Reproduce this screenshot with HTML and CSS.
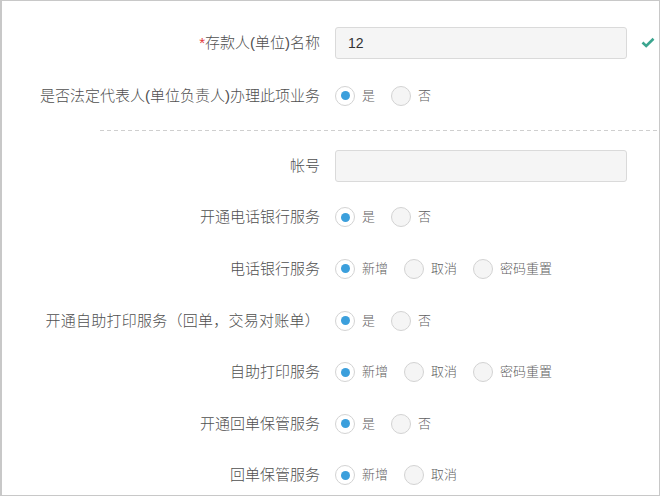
FILE: index.html
```html
<!DOCTYPE html>
<html lang="zh-CN">
<head>
<meta charset="utf-8">
<title>开户信息</title>
<link rel="stylesheet" href="styles.css">
</head>
<body>
<div class="frame">
  <div class="section section-top">
    <div class="row row-tall">
      <div class="label"><span class="req">*</span>存款人(单位)名称</div>
      <div class="ctrl">
        <div class="input">12</div>
        <svg class="check" width="14" height="11" viewBox="0 0 14 11"><polyline points="1.5,5.5 5.2,9 12.5,1.8" fill="none" stroke="#3ba58f" stroke-width="2.6" stroke-linecap="butt" stroke-linejoin="miter"/></svg>
      </div>
    </div>
    <div class="row row-tall">
      <div class="label">是否法定代表人(单位负责人)办理此项业务</div>
      <div class="ctrl">
        <span class="radio"><span class="dot on"></span>是</span>
        <span class="radio"><span class="dot"></span>否</span>
      </div>
    </div>
  </div>
  <div class="divider"></div>
  <div class="section">
    <div class="row">
      <div class="label">帐号</div>
      <div class="ctrl"><div class="input"></div></div>
    </div>
    <div class="row">
      <div class="label">开通电话银行服务</div>
      <div class="ctrl">
        <span class="radio"><span class="dot on"></span>是</span>
        <span class="radio"><span class="dot"></span>否</span>
      </div>
    </div>
    <div class="row">
      <div class="label">电话银行服务</div>
      <div class="ctrl">
        <span class="radio"><span class="dot on"></span>新增</span>
        <span class="radio"><span class="dot"></span>取消</span>
        <span class="radio"><span class="dot"></span>密码重置</span>
      </div>
    </div>
    <div class="row">
      <div class="label wide">开通自助打印服务（回单，交易对账单）</div>
      <div class="ctrl">
        <span class="radio"><span class="dot on"></span>是</span>
        <span class="radio"><span class="dot"></span>否</span>
      </div>
    </div>
    <div class="row">
      <div class="label">自助打印服务</div>
      <div class="ctrl">
        <span class="radio"><span class="dot on"></span>新增</span>
        <span class="radio"><span class="dot"></span>取消</span>
        <span class="radio"><span class="dot"></span>密码重置</span>
      </div>
    </div>
    <div class="row">
      <div class="label">开通回单保管服务</div>
      <div class="ctrl">
        <span class="radio"><span class="dot on"></span>是</span>
        <span class="radio"><span class="dot"></span>否</span>
      </div>
    </div>
    <div class="row">
      <div class="label">回单保管服务</div>
      <div class="ctrl">
        <span class="radio"><span class="dot on"></span>新增</span>
        <span class="radio"><span class="dot"></span>取消</span>
      </div>
    </div>
  </div>
</div>
</body>
</html>
```
FILE: styles.css
```css
html, body {
  margin: 0;
  padding: 0;
  background: #ffffff;
}

.frame {
  width: 660px;
  height: 496px;
  box-sizing: border-box;
  border: 1px solid #c8c8c8;
  border-left-width: 2px;
  overflow: hidden;
  font-family: "Liberation Sans", "Noto Sans CJK SC", sans-serif;
  color: #555555;
}

.section-top {
  padding-top: 15px;
}

.row {
  display: grid;
  grid-template-columns: 318px auto;
  column-gap: 15px;
  align-items: center;
  height: 51.6px;
}

.row-tall {
  height: 53px;
}

.label {
  text-align: right;
  font-size: 15px;
  font-weight: 300;
  line-height: 20px;
  color: #4f4f4f;
  white-space: nowrap;
}

.label.wide {
  letter-spacing: 0.25px;
}

.req {
  color: #e4393c;
}

.ctrl {
  display: flex;
  align-items: center;
}

.input {
  width: 292px;
  height: 32px;
  box-sizing: border-box;
  border: 1px solid #dadada;
  border-radius: 3px;
  background: #f5f5f5;
  padding-left: 12px;
  font-size: 14px;
  line-height: 30px;
  color: #333333;
}

.check {
  margin-left: 14px;
}

.divider {
  height: 1px;
  margin: 8px 0 9px 98px;
  background: repeating-linear-gradient(to right, #cfcfcf 0, #cfcfcf 4px, transparent 4px, transparent 7px);
}

.radio {
  display: inline-flex;
  align-items: center;
  margin-right: 16px;
  font-size: 13px;
  font-weight: 300;
  line-height: 20px;
  color: #5f5f5f;
}

.dot {
  width: 20px;
  height: 20px;
  box-sizing: border-box;
  border: 1px solid #d3d3d3;
  border-radius: 50%;
  background: #f5f5f5;
  margin-right: 7px;
  display: grid;
  place-items: center;
}

.dot.on {
  background: #ffffff;
}

.dot.on::after {
  content: "";
  width: 9px;
  height: 9px;
  border-radius: 50%;
  background: #3b9fdc;
}
```
